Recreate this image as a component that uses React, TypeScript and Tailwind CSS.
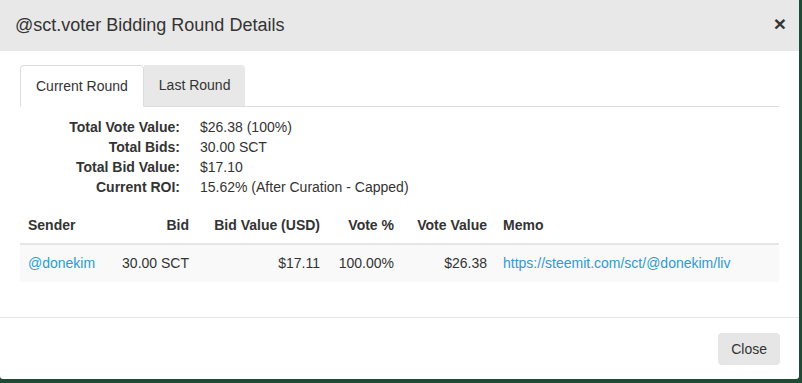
import React from 'react';

interface Bid {
  sender: string;
  bid: string;
  bidValue: string;
  votePct: string;
  voteValue: string;
  memo: string;
}

const summary: [string, string][] = [
  ['Total Vote Value:', '$26.38 (100%)'],
  ['Total Bids:', '30.00 SCT'],
  ['Total Bid Value:', '$17.10'],
  ['Current ROI:', '15.62% (After Curation - Capped)'],
];

const bids: Bid[] = [
  {
    sender: '@donekim',
    bid: '30.00 SCT',
    bidValue: '$17.11',
    votePct: '100.00%',
    voteValue: '$26.38',
    memo: 'https://steemit.com/sct/@donekim/liv',
  },
];

export default function App() {
  return (
    <div
      className="w-[802px] h-[383px] bg-[#1f4a36] overflow-hidden text-[14px] text-[#333]"
      style={{ fontFamily: '"Liberation Sans", Arial, sans-serif' }}
    >
      <div className="w-[799px] h-[379px] bg-white rounded-b-[3px] flex flex-col">
        {/* Header */}
        <div className="h-[51px] bg-[#e8e8e8] flex items-center justify-between pl-[15px] pr-[13px]">
          <h4 className="text-[18px] leading-none pb-[1px]">@sct.voter Bidding Round Details</h4>
          <span className="text-[21px] font-bold leading-none text-[#222] opacity-90 -mt-[4px]">×</span>
        </div>

        {/* Body */}
        <div className="px-[20px] pt-[14px] h-[267px] border-b border-[#e5e5e5]">
          <div className="flex border-b border-[#ddd] h-[42px]">
            <div className="h-[42px] px-[15px] flex items-center bg-white border border-[#ddd] border-b-white rounded-t-[4px]">
              Current Round
            </div>
            <div className="h-[41px] px-[15px] flex items-center bg-[#e8e8e8] rounded-tr-[4px]">
              Last Round
            </div>
          </div>

          <dl className="mt-[10px]">
            {summary.map(([label, value]) => (
              <div key={label} className="flex leading-[20px]">
                <dt className="w-[160px] text-right font-bold">{label}</dt>
                <dd className="ml-[20px]">{value}</dd>
              </div>
            ))}
          </dl>

          <table className="mt-[10px] w-full border-collapse">
            <thead>
              <tr className="border-b-2 border-[#e6e6e6] leading-[20px]">
                <th className="w-[91px] p-[8px] text-left font-bold">Sender</th>
                <th className="w-[86px] p-[8px] text-right font-bold">Bid</th>
                <th className="w-[131px] p-[8px] text-right font-bold">Bid Value (USD)</th>
                <th className="w-[74px] p-[8px] text-right font-bold">Vote %</th>
                <th className="w-[93px] p-[8px] text-right font-bold">Vote Value</th>
                <th className="p-[8px] text-left font-bold">Memo</th>
              </tr>
            </thead>
            <tbody>
              {bids.map((b) => (
                <tr key={b.sender} className="bg-[#f9f9f9] leading-[21px]">
                  <td className="p-[8px] text-[#2f9ad3]">{b.sender}</td>
                  <td className="p-[8px] text-right whitespace-nowrap">{b.bid}</td>
                  <td className="p-[8px] text-right">{b.bidValue}</td>
                  <td className="p-[8px] text-right">{b.votePct}</td>
                  <td className="p-[8px] text-right">{b.voteValue}</td>
                  <td className="p-[8px] text-[#2f9ad3]">{b.memo}</td>
                </tr>
              ))}
            </tbody>
          </table>
        </div>

        {/* Footer */}
        <div className="flex justify-end pt-[15px] pr-[19px]">
          <button className="h-[32px] px-[13px] bg-[#e6e6e6] rounded-[4px] text-[14px] text-[#333]">
            Close
          </button>
        </div>
      </div>
    </div>
  );
}
